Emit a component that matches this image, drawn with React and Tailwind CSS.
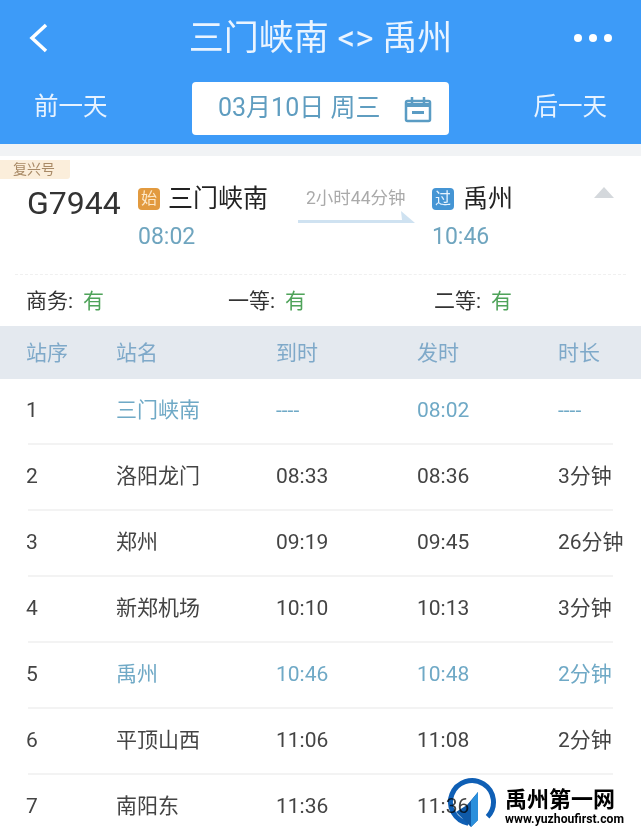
const FONT = "font-['Roboto','Noto_Sans_CJK_SC',sans-serif]";

const STOPS = [
  { no: 1, name: '三门峡南', arrive: '----', depart: '08:02', stay: '----', on: true },
  { no: 2, name: '洛阳龙门', arrive: '08:33', depart: '08:36', stay: '3分钟' },
  { no: 3, name: '郑州', arrive: '09:19', depart: '09:45', stay: '26分钟' },
  { no: 4, name: '新郑机场', arrive: '10:10', depart: '10:13', stay: '3分钟' },
  { no: 5, name: '禹州', arrive: '10:46', depart: '10:48', stay: '2分钟', on: true },
  { no: 6, name: '平顶山西', arrive: '11:06', depart: '11:08', stay: '2分钟' },
  { no: 7, name: '南阳东', arrive: '11:36', depart: '11:36', stay: '' },
];

const ROW = 'grid grid-cols-[90px_160px_141px_141px_1fr] pl-[26px] items-center';

const CalendarIcon = () => (
  <svg width="28" height="28" viewBox="0 0 28 28" fill="none" stroke="#5a9cc4" className="shrink-0">
    <rect x="2" y="6" width="24" height="20" rx="1.500" strokeWidth="2.500" />
    <path d="M2 10h24" strokeWidth="4" />
    <path d="M8 2v7M20 2v7" strokeWidth="2.500" />
    <path d="M8 17.500h12" strokeWidth="3" />
  </svg>
);

const Logo = () => (
  <svg width="52" height="52" viewBox="0 0 52 52" className="shrink-0">
    <path d="M40.600 39.800A21.500 21.500 0 1 0 21.200 46.200" fill="none" stroke="#0f5fb5" strokeWidth="5" />
    <path d="M9 35L20 28L31 15V43L24 50Z" fill="#0f5aa8" />
    <path d="M24 24L31 15V43L24 50Z" fill="#2a8fdc" />
  </svg>
);

const Seat = ({ label, className }) => (
  <div className={`text-[21px] text-[#333] ${className}`}>
    {label}:<span className="ml-[10px] text-[#4fa35a]">有</span>
  </div>
);

export default function App() {
  return (
    <div className={`relative h-[839px] w-[641px] overflow-hidden bg-white blur-[0.4px] ${FONT}`}>
      {/* Header */}
      <div className="h-[144px] bg-[#3d9bf8] text-white">
        <div className="relative flex h-[80px] items-center justify-center pb-[4px]">
          <svg width="20" height="30" viewBox="0 0 20 30" fill="none" stroke="white" strokeWidth="3.500" className="absolute left-[29px] top-[23px]">
            <path d="M17 2L3 15l14 13" />
          </svg>
          <span className="text-[35px] leading-none text-[#eaf4ff]">三门峡南 &lt;&gt; 禹州</span>
          <div className="absolute left-[574px] top-[34px] flex gap-[7px]">
            <i className="size-[8px] rounded-full bg-white" />
            <i className="size-[8px] rounded-full bg-white" />
            <i className="size-[8px] rounded-full bg-white" />
          </div>
        </div>
        <div className="mt-[2px] flex items-center pl-[34px] pr-[34px]">
          <span className="w-[158px] pb-[3px] text-[24.500px] leading-none text-[#e8f3ff]">前一天</span>
          <div className="flex h-[53px] w-[257px] items-center rounded-[4px] bg-white pl-[26px] text-[#5f9dc0]">
            <span className="w-[186px] pb-[2px] text-[25px]">03月10日 周三</span>
            <CalendarIcon />
          </div>
          <span className="ml-auto pb-[3px] text-[24.500px] leading-none text-[#e8f3ff]">后一天</span>
        </div>
      </div>
      <div className="h-[12px] bg-[#f1f3f5]" />

      {/* Train card */}
      <div className="relative h-[170px]">
        <div className="absolute left-0 top-[4px] h-[19px] w-[70px] rounded-br-[3px] bg-[#fbeedb] pl-[13px] text-[14px] leading-[19px] text-[#a98a66]">复兴号</div>
        <div className="mx-[15px] flex h-[119px] border-b border-dashed border-[#f0f0f0] pl-[12px] pt-[28px]">
          <div className="w-[111px] text-[32px] leading-[38px] text-[#333]">G7944</div>
          <div className="w-[159px]">
            <div className="flex h-[30px] items-center">
              <span className="mr-[8px] flex size-[22px] items-center justify-center rounded-[4px] bg-[#e29a3f] text-[16px] text-[#fde8c8]">始</span>
              <span className="text-[25px] text-[#222]">三门峡南</span>
            </div>
            <div className="mt-[8px] text-[23px] leading-[30px] text-[#6fa5bf]">08:02</div>
          </div>
          <div className="w-[135px]">
            <div className="pl-[9px] pt-[2px] text-[17.500px] leading-[24px] text-[#aaa]">2小时44分钟</div>
            <svg width="120" height="14" viewBox="0 0 120 14">
              <path d="M1 10H105L104 1L118 13H1Z" fill="#cfe2f1" />
            </svg>
          </div>
          <div>
            <div className="flex h-[30px] items-center">
              <span className="mr-[9px] flex size-[22px] items-center justify-center rounded-[4px] bg-[#4595d4] text-[16px] text-[#e6f3ff]">过</span>
              <span className="text-[25px] text-[#222]">禹州</span>
            </div>
            <div className="mt-[8px] text-[23px] leading-[30px] text-[#6fa5bf]">10:46</div>
          </div>
          <svg width="20" height="12" viewBox="0 0 20 12" className="absolute left-[594px] top-[31px]">
            <path d="M10 0L20 11H0Z" fill="#d4d8dc" />
          </svg>
        </div>
        <div className="flex h-[50px] items-center pl-[26px] pt-[3px]">
          <Seat label="商务" className="w-[202px]" />
          <Seat label="一等" className="w-[206px]" />
          <Seat label="二等" />
        </div>
      </div>

      {/* Stop table */}
      <div className={`${ROW} h-[53px] bg-[#e4e9ef] pt-[3px] text-[21px] text-[#7fa9c9]`}>
        <span>站序</span>
        <span>站名</span>
        <span>到时</span>
        <span>发时</span>
        <span>时长</span>
      </div>
      {STOPS.map(s => (
        <div key={s.no} className="h-[66px]">
          <div className={`${ROW} h-[63px] text-[21px] ${s.on ? 'text-[#6fa9c6]' : 'text-[#444]'}`}>
            <span className="text-[#444]">{s.no}</span>
            <span>{s.name}</span>
            <span>{s.arrive}</span>
            <span>{s.depart}</span>
            <span className="whitespace-nowrap">{s.stay}</span>
          </div>
          <div className="mx-[28px] mt-[1px] h-[2px] bg-[#f3f3f3]" />
        </div>
      ))}

      {/* Watermark */}
      <div className="absolute left-[447px] top-[777px] flex items-start gap-[6px] mix-blend-multiply">
        <Logo />
        <div className="pt-[11px]">
          <div className="text-[22px] font-bold leading-[24px] text-black">禹州第一网</div>
          <div className="text-[12.200px] font-bold leading-[14px] text-black">www.yuzhoufirst.com</div>
        </div>
      </div>
    </div>
  );
}
